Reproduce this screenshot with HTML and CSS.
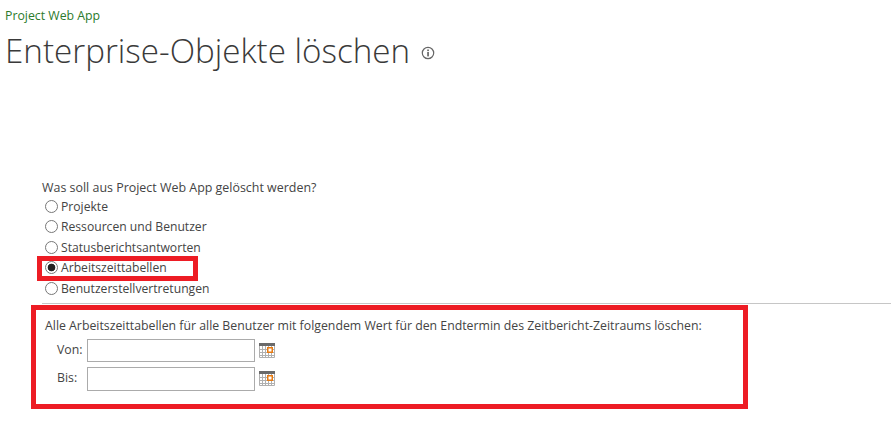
FILE: index.html
```html
<!DOCTYPE html>
<html>
<head>
    <title>Enterprise-Objekte löschen</title>
    <link rel="stylesheet" href="styles.css">
</head>
<body>
    <div class="breadcrumb">Project Web App</div>
    <div class="titel">
        <h1>Enterprise-Objekte löschen</h1>
        <svg class="info" width="14" height="14" viewBox="0 0 14 14">
            <circle cx="7" cy="7" r="5.7" fill="none" stroke="#666" stroke-width="1.2"/>
            <rect x="6.2" y="6" width="1.7" height="4.4" fill="#666"/>
            <rect x="6.2" y="3.5" width="1.7" height="1.6" fill="#666"/>
        </svg>
    </div>

    <div class="auswahl">
        <div class="frage">Was soll aus Project Web App gelöscht werden?</div>
        <label class="option"><input type="radio" name="typ">Projekte</label>
        <label class="option"><input type="radio" name="typ">Ressourcen und Benutzer</label>
        <label class="option"><input type="radio" name="typ">Statusberichtsantworten</label>
        <label class="option markiert"><input type="radio" name="typ" checked>Arbeitszeittabellen</label>
        <label class="option"><input type="radio" name="typ">Benutzerstellvertretungen</label>
    </div>

    <hr class="trenner">

    <div class="zeitraum">
        <div class="hinweis">Alle Arbeitszeittabellen für alle Benutzer mit folgendem Wert für den Endtermin des Zeitbericht-Zeitraums löschen:</div>
        <div class="datum">
            <label for="von">Von:</label>
            <input type="text" id="von">
            <svg class="kalender" width="16" height="16" viewBox="0 0 16 16">
                <rect y="1" width="16" height="15" fill="#fff"/>
                <rect y="1" width="16" height="3" fill="#6a6a6a"/>
                <path d="M.5 4V15.5H15.5V4M0 7.5H16M0 10.5H16M0 13.5H16M3.5 4V16M6.5 4V16M9.5 4V16M12.5 4V16" fill="none" stroke="#b0b0b0"/>
                <rect x="8.75" y="5.75" width="4.5" height="4.5" fill="#fff" stroke="#e87a10" stroke-width="1.5"/>
            </svg>
        </div>
        <div class="datum">
            <label for="bis">Bis:</label>
            <input type="text" id="bis" class="hoch">
            <svg class="kalender" width="16" height="16" viewBox="0 0 16 16">
                <rect y="1" width="16" height="15" fill="#fff"/>
                <rect y="1" width="16" height="3" fill="#6a6a6a"/>
                <path d="M.5 4V15.5H15.5V4M0 7.5H16M0 10.5H16M0 13.5H16M3.5 4V16M6.5 4V16M9.5 4V16M12.5 4V16" fill="none" stroke="#b0b0b0"/>
                <rect x="8.75" y="5.75" width="4.5" height="4.5" fill="#fff" stroke="#e87a10" stroke-width="1.5"/>
            </svg>
        </div>
    </div>
</body>
</html>
```

FILE: styles.css
```css
body {
    font-family: "Open Sans", Arial, sans-serif;
    font-size: 12.3px;
    color: #444;
    margin: 0;
    background-color: #fff;
    overflow: hidden;
}

.breadcrumb {
    color: #2b7a2b;
    margin: 7px 0 0 5px;
    height: 17px;
    line-height: 17px;
}

.titel {
    display: flex;
    align-items: center;
    margin-left: 5px;
    height: 52px;
}

h1 {
    font-size: 33.2px;
    font-weight: 300;
    color: #3a3a3a;
    margin: 2px 0 0;
    line-height: 50px;
}

.info {
    margin: 6px 0 0 11px;
}

.auswahl {
    margin: 103px 0 0 42px;
}

.frage {
    height: 17px;
    line-height: 17px;
    font-size: 12.45px;
}

.option {
    display: flex;
    align-items: center;
    height: 20.5px;
    position: relative;
    font-size: 12.15px;
}

.option input {
    appearance: none;
    width: 13px;
    height: 13px;
    margin: 0 3px 0 3px;
    border: 1px solid #777;
    border-radius: 50%;
    background-color: #fff;
}

.option input:checked {
    background-image: radial-gradient(circle, #222 0, #222 3.5px, #fff 4.2px);
}

.markiert::after {
    content: "";
    position: absolute;
    left: -5px;
    top: -1.5px;
    width: 151px;
    height: 15px;
    border: 5px solid #ed1c24;
}

.trenner {
    border: none;
    border-top: 1px solid #c6c6c6;
    margin: 4.5px 0 0 42px;
}

.zeitraum {
    margin: 1px 0 0 31px;
    width: 698px;
    height: 94px;
    border: 5px solid #ed1c24;
    padding-left: 9px;
}

.hinweis {
    margin-top: 7px;
    height: 18px;
    line-height: 18px;
}

.datum {
    display: flex;
    align-items: flex-start;
    height: 24px;
    margin-top: 4px;
    padding-left: 12px;
}

.datum label {
    width: 30px;
    line-height: 22px;
}

.datum input {
    width: 166px;
    height: 21px;
    box-sizing: content-box;
    padding: 0;
    border: 1px solid #ababab;
    margin: 0 4px 0 0;
}

.datum input.hoch {
    height: 22px;
}

.kalender {
    margin-top: 3px;
}
```
